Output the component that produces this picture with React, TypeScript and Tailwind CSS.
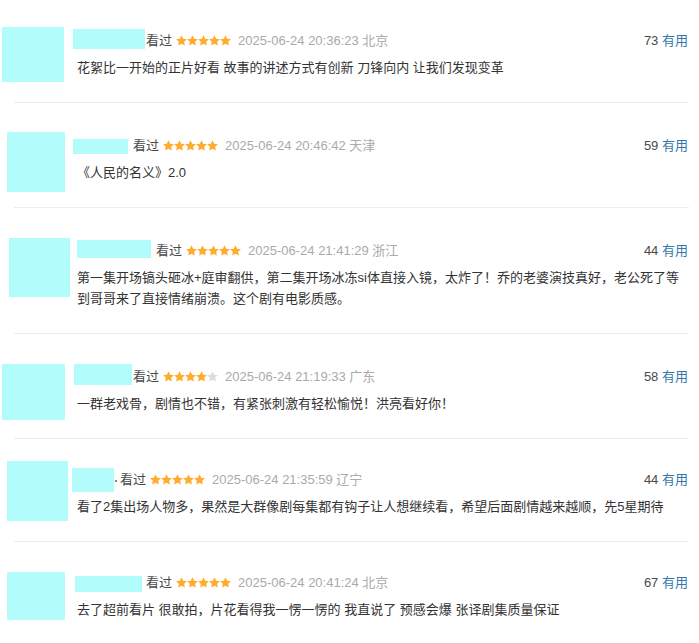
import React from 'react';

interface Review {
  id: number;
  avatar: string;
  name: string;
  dot?: boolean;
  rating: number;
  time: string;
  place: string;
  votes: number;
  lines: string[];
  pt: string;
}

const reviews: Review[] = [
  {
    id: 1,
    avatar: 'ml-[2px] mt-[-4px] w-[62px] h-[55px]',
    name: 'ml-[-4px] mt-[-2px] w-[72px] h-[20px] mr-[1px]',
    rating: 5,
    time: '2025-06-24 20:36:23',
    place: '北京',
    votes: 73,
    lines: ['花絮比一开始的正片好看 故事的讲述方式有创新 刀锋向内 让我们发现变革'],
    pt: 'pt-[31px]',
  },
  {
    id: 2,
    avatar: 'ml-[7px] mt-[-4px] w-[58px] h-[60px]',
    name: 'ml-[-4px] mt-[3px] w-[55px] h-[15px] mr-[5px]',
    rating: 5,
    time: '2025-06-24 20:46:42',
    place: '天津',
    votes: 59,
    lines: ['《人民的名义》2.0'],
    pt: 'pt-[33px]',
  },
  {
    id: 3,
    avatar: 'ml-[9px] mt-[-3px] w-[61px] h-[59px]',
    name: 'ml-[0px] mt-[-1px] w-[74px] h-[18px] mr-[5px]',
    rating: 5,
    time: '2025-06-24 21:41:29',
    place: '浙江',
    votes: 44,
    lines: [
      '第一集开场镐头砸冰+庭审翻供，第二集开场冰冻si体直接入镜，太炸了！乔的老婆演技真好，老公死了等',
      '到哥哥来了直接情绪崩溃。这个剧有电影质感。',
    ],
    pt: 'pt-[33px]',
  },
  {
    id: 4,
    avatar: 'ml-[2px] mt-[-3px] w-[63px] h-[56px]',
    name: 'ml-[-3px] mt-[-3px] w-[58px] h-[21px] mr-[1px]',
    rating: 4,
    time: '2025-06-24 21:19:33',
    place: '广东',
    votes: 58,
    lines: ['一群老戏骨，剧情也不错，有紧张刺激有轻松愉悦！洪亮看好你！'],
    pt: 'pt-[33px]',
  },
  {
    id: 5,
    avatar: 'ml-[7px] mt-[-9px] w-[61px] h-[60px]',
    name: 'ml-[-5px] mt-[-2px] w-[42px] h-[24px] mr-[1px]',
    dot: true,
    rating: 5,
    time: '2025-06-24 21:35:59',
    place: '辽宁',
    votes: 44,
    lines: ['看了2集出场人物多，果然是大群像剧每集都有钩子让人想继续看，希望后面剧情越来越顺，先5星期待'],
    pt: 'pt-[31px]',
  },
  {
    id: 6,
    avatar: 'ml-[7px] mt-[-1px] w-[58px] h-[48px]',
    name: 'ml-[-2px] mt-[3px] w-[67px] h-[16px] mr-[4px]',
    rating: 5,
    time: '2025-06-24 20:41:24',
    place: '北京',
    votes: 67,
    lines: ['去了超前看片 很敢拍，片花看得我一愣一愣的 我直说了 预感会爆 张译剧集质量保证'],
    pt: 'pt-[31px]',
  },
];

const Star = ({ on }: { on: boolean }) => (
  <svg width="11" height="11" viewBox="0 0 24 23" className="shrink-0">
    <path
      d="M12 0l3.6 7.5 8.2 1-6 5.7 1.5 8.2L12 18.4l-7.3 4 1.5-8.2-6-5.7 8.2-1z"
      fill={on ? '#ffac2d' : '#dcdcdc'}
    />
  </svg>
);

const ReviewItem = ({ r, last }: { r: Review; last: boolean }) => (
  <>
    <div className={`flex ${r.pt} pb-[24px]`}>
      {/* 头像占位 */}
      <div className="w-[77px] shrink-0 h-0">
        <div className={`bg-[#b3fcfc] ${r.avatar}`}></div>
      </div>
      <div className="flex-1 min-w-0 pr-[11px]">
        <div className="flex items-start h-[20px] text-[13px] leading-[20px]">
          <div className={`bg-[#b3fcfc] shrink-0 ${r.name}`}></div>
          {r.dot && <span className="w-[2px] h-[2px] bg-[#888] mt-[10px] mr-[3px] shrink-0"></span>}
          <span className="text-[#494949]">看过</span>
          <span className="flex ml-[4px] mr-[7px] mt-[4px]">
            {[0, 1, 2, 3, 4].map(i => (
              <Star key={i} on={i < r.rating} />
            ))}
          </span>
          <span className="text-[#aaa] text-[13px]">
            {r.time} {r.place}
          </span>
          <span className="ml-auto text-[#494949]">
            {r.votes} <span className="text-[#3377aa]">有用</span>
          </span>
        </div>
        <p className="mt-[6px] text-[13px] leading-[21px] text-[#333] whitespace-nowrap">
          {r.lines.map((l, i) => (
            <span key={i} className="block">
              {l}
            </span>
          ))}
        </p>
      </div>
    </div>
    {!last && <div className="h-px bg-[#ececec] ml-[14px] mr-[10px]"></div>}
  </>
);

export default function App() {
  return (
    <div
      className="w-[699px] h-[643px] overflow-hidden bg-white"
      style={{ fontFamily: '"Liberation Sans", Arial, "Noto Sans CJK SC", sans-serif' }}
    >
      {reviews.map((r, i) => (
        <ReviewItem key={r.id} r={r} last={i === reviews.length - 1} />
      ))}
    </div>
  );
}
